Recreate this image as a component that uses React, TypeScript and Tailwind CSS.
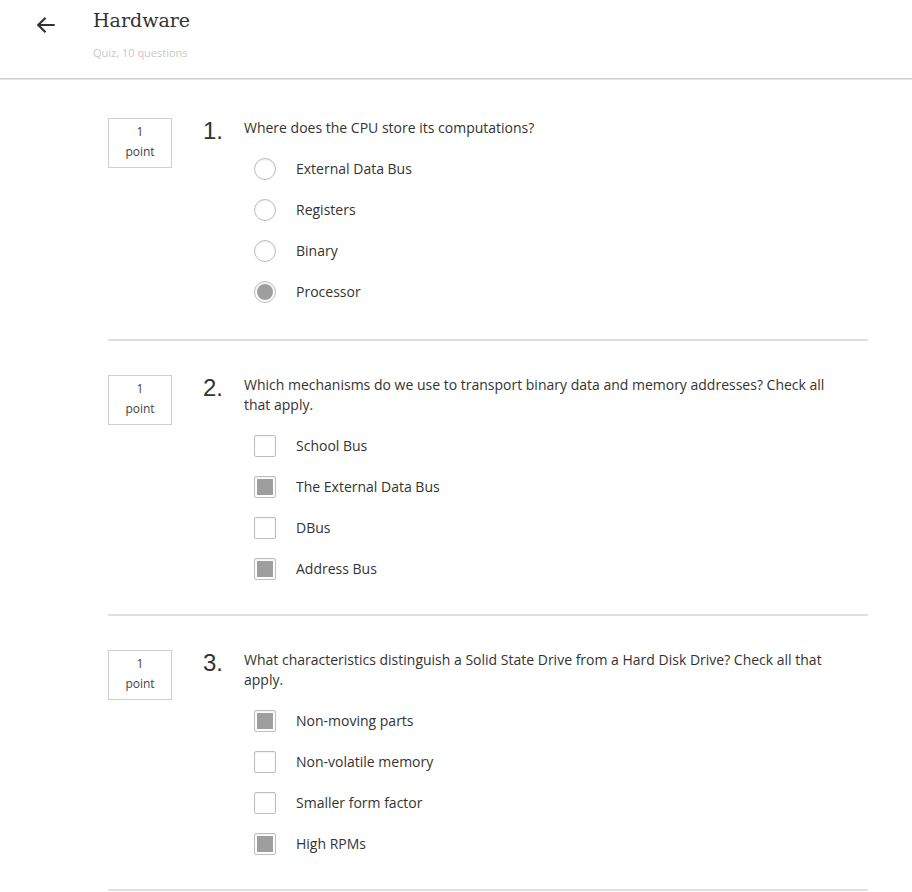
import React from "react";

type Question = {
  id: number;
  text: string;
  kind: "radio" | "checkbox";
  options: { label: string; checked: boolean }[];
};

const questions: Question[] = [
  {
    id: 1,
    text: "Where does the CPU store its computations?",
    kind: "radio",
    options: [
      { label: "External Data Bus", checked: false },
      { label: "Registers", checked: false },
      { label: "Binary", checked: false },
      { label: "Processor", checked: true },
    ],
  },
  {
    id: 2,
    text: "Which mechanisms do we use to transport binary data and memory addresses? Check all that apply.",
    kind: "checkbox",
    options: [
      { label: "School Bus", checked: false },
      { label: "The External Data Bus", checked: true },
      { label: "DBus", checked: false },
      { label: "Address Bus", checked: true },
    ],
  },
  {
    id: 3,
    text: "What characteristics distinguish a Solid State Drive from a Hard Disk Drive? Check all that apply.",
    kind: "checkbox",
    options: [
      { label: "Non-moving parts", checked: true },
      { label: "Non-volatile memory", checked: false },
      { label: "Smaller form factor", checked: false },
      { label: "High RPMs", checked: true },
    ],
  },
];

const Radio: React.FC<{ checked: boolean }> = ({ checked }) => (
  <span className="flex h-[22px] w-[22px] items-center justify-center rounded-full border border-[#bdbdbd] bg-white shadow-[inset_0_1px_2px_rgba(0,0,0,0.08)]">
    {checked && <span className="h-[16px] w-[16px] rounded-full bg-[#9e9e9e]" />}
  </span>
);

const Checkbox: React.FC<{ checked: boolean }> = ({ checked }) => (
  <span className="flex h-[22px] w-[22px] items-center justify-center rounded-[2px] border border-[#bdbdbd] bg-white shadow-[inset_0_1px_2px_rgba(0,0,0,0.06)]">
    {checked && <span className="h-[16px] w-[16px] bg-[#9e9e9e]" />}
  </span>
);

const App: React.FC = () => {
  return (
    <div className="min-h-[892px] bg-white text-[#333] [font-family:'Open_Sans',sans-serif]">
      <div className="flex h-[79px] border-b border-[#d0d0d0] shadow-[0_1px_0_#e6e6e6]">
        <div className="flex w-[93px] justify-center pt-[14px]">
          <svg
            width="22"
            height="22"
            viewBox="0 0 24 24"
            fill="none"
            stroke="#333"
            strokeWidth="2.4"
            className="ml-[-1px]"
          >
            <path d="M21.5 12H3.5M11.5 4l-8 8 8 8" />
          </svg>
        </div>
        <div className="pt-[6px]">
          <h1 className="text-[19px] leading-[28px] text-[#333] [font-family:'DejaVu_Serif',serif]">
            Hardware
          </h1>
          <p className="mt-[11px] text-[11px] leading-[16px] text-[#c8c8c8]">
            Quiz, 10 questions
          </p>
        </div>
      </div>

      <div className="ml-[108px] w-[760px]">
        {questions.map((q, i) => (
          <div
            key={q.id}
            className={`flex border-b-2 border-[#e0e0e0] ${
              i === 0 ? "pt-[39px] pb-[27px]" : "pt-[34px] pb-[25px]"
            }`}
          >
            <div className="flex h-[50px] w-[64px] shrink-0 flex-col items-center border border-[#cfcfcf] pt-[3px] text-[12px] leading-[20px] text-[#444]">
              <span>1</span>
              <span>point</span>
            </div>
            <div className="w-[40px] shrink-0 pl-[31px] pt-[3px] text-[24px] leading-[20px] text-[#333] [font-family:'Liberation_Sans',sans-serif]">
              {q.id}.
            </div>
            <div className="flex-1 pl-[32px]">
              <p className="pr-[40px] text-[14px] leading-[20px] text-[#333]">
                {q.text}
              </p>
              <div className="mt-[10px] flex flex-col">
                {q.options.map((o) => (
                  <label
                    key={o.label}
                    className="flex h-[41px] items-center pl-[10px] text-[14px] text-[#333]"
                  >
                    {q.kind === "radio" ? (
                      <Radio checked={o.checked} />
                    ) : (
                      <Checkbox checked={o.checked} />
                    )}
                    <span className="ml-[20px]">{o.label}</span>
                  </label>
                ))}
              </div>
            </div>
          </div>
        ))}
      </div>
    </div>
  );
};

export default App;
